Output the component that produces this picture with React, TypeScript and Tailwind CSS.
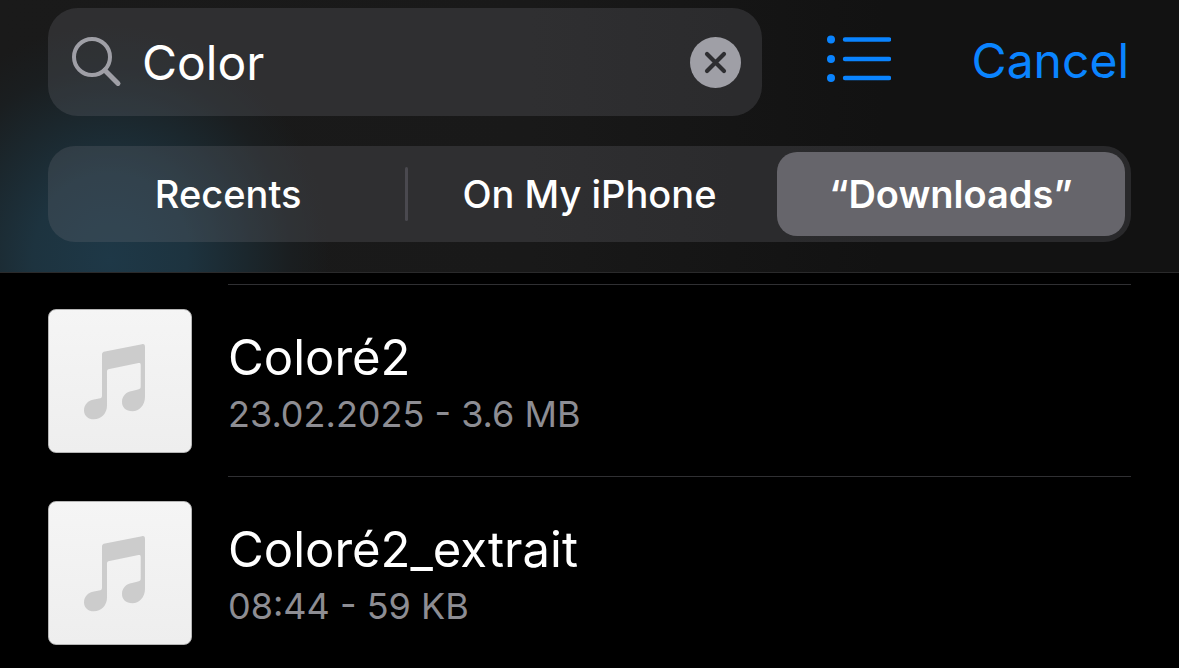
import { useState } from 'react'

const scopes = ['Recents', 'On My iPhone', '“Downloads”']

const files = [
  { name: 'Coloré2', details: '23.02.2025 - 3.6 MB' },
  { name: 'Coloré2_extrait', details: '08:44 - 59 KB' },
]

function SearchIcon() {
  return (
    <svg viewBox="0 0 50 50" fill="none" stroke="#9f9fa6" className="size-[50px] shrink-0" aria-hidden="true">
      <circle cx="20" cy="20" r="18" strokeWidth="4" />
      <path d="M32.8 33.2 46 46.4" strokeWidth="5" strokeLinecap="round" />
    </svg>
  )
}

function ClearIcon() {
  return (
    <svg viewBox="0 0 51 51" className="size-[51px]" aria-hidden="true">
      <circle cx="25.5" cy="25.5" r="25.5" fill="#9f9fa6" />
      <path d="M17 17 34 34M34 17 17 34" stroke="#2e2e31" strokeWidth="4.2" strokeLinecap="round" />
    </svg>
  )
}

function ListIcon() {
  return (
    <svg viewBox="0 0 64 48" className="h-12 w-16" aria-hidden="true">
      <g fill="#0a84ff">
        <circle cx="4" cy="4.5" r="4" />
        <circle cx="4" cy="24" r="4" />
        <circle cx="4" cy="43" r="4" />
      </g>
      <path d="M18 4.5H62M18 24H62M18 43H62" stroke="#0a84ff" strokeWidth="4.4" strokeLinecap="round" />
    </svg>
  )
}

function MusicThumbnail() {
  return (
    <div className="size-36 shrink-0 rounded-lg border border-[#b5b5b5] bg-linear-to-b from-[#f5f5f5] to-[#eeeeee]">
      <svg viewBox="0 0 142 142" fill="#cccccc" className="size-full" aria-hidden="true">
        <path d="M93 34.2C95.300 33.800 96 35 96 37V87C96 95.500 90 101.300 83.500 101.300C77 101.300 73 97.500 73 92C73 86 77 82 83 81L89 79.500C91 79 91.700 78.500 91.700 76.500V55C91.700 53.300 91 52.800 89.500 53.100L60.500 59C58.700 59.400 58 60 58 61.700V95.500C58 103.500 52 109.300 45 109.300C39 109.300 35 105.700 35 100.500C35 94.500 39 90.500 45 89.500L50 88.600C52.300 88.200 53 87.500 53 85.500V44.500C53 42.500 54 41.800 56 41.400Z" />
      </svg>
    </div>
  )
}

export default function App() {
  const [query, setQuery] = useState('Color')
  const [scope, setScope] = useState(2)

  return (
    <main className="min-h-screen bg-black font-['Inter',sans-serif] text-white">
      <header className="flex flex-col gap-[30px] border-b border-[#2a2a2b] bg-[radial-gradient(ellipse_220px_235px_at_110px_260px,#1e3847_0%,#1d333f_35%,#1b272d_62%,#1a1e20_82%,#1a1a1a00_100%),linear-gradient(to_right,#1a1a1a,#191919_45%,#121212_75%)] px-12 pt-2 pb-[30px]">
        <div className="flex items-center">
          <div className="flex h-[108px] min-w-0 flex-1 items-center rounded-[30px] bg-[#76767f]/24 pr-[21px] pl-6">
            <SearchIcon />
            <input
              type="text"
              aria-label="Search"
              value={query}
              onChange={(e) => setQuery(e.target.value)}
              className="mt-0.5 ml-5 h-16 min-w-0 flex-1 bg-transparent text-[48px] outline-none"
            />
            <button type="button" aria-label="Clear text" onClick={() => setQuery('')}>
              <ClearIcon />
            </button>
          </div>
          <button type="button" aria-label="List view" className="mb-1.5 ml-[65px]">
            <ListIcon />
          </button>
          <button type="button" className="mr-0.5 mb-0.5 ml-[81px] text-[48px] leading-[60px] text-[#0a84ff]">
            Cancel
          </button>
        </div>

        <div role="tablist" className="flex h-24 items-center rounded-[27px] bg-[#76767f]/24 p-1.5">
          {scopes.map((label, i) => (
            <div key={label} className="contents">
              {i > 0 && (
                <span
                  className={`mr-[7px] ml-[3px] h-[54px] w-[3px] rounded-full ${
                    scope === i || scope === i - 1 ? 'bg-transparent' : 'bg-[#4a494f]'
                  }`}
                />
              )}
              <button
                type="button"
                role="tab"
                aria-selected={scope === i}
                onClick={() => setScope(i)}
                className={`h-full flex-1 basis-0 rounded-[20px] text-[38px] ${
                  scope === i ? 'bg-[#66656b] font-semibold' : 'font-medium'
                }`}
              >
                {label}
              </button>
            </div>
          ))}
        </div>
      </header>

      <ul className="pt-[11px]">
        {files.map((file) => (
          <li key={file.name} className="flex h-48 px-12">
            <div className="pt-[25px]">
              <MusicThumbnail />
            </div>
            <div className="ml-9 min-w-0 flex-1 border-t border-[#303033] pt-[42px]">
              <p className="truncate text-[49px] leading-[62px]">{file.name}</p>
              <p className="truncate text-[36px] leading-[50px] text-[#8d8d93]">{file.details}</p>
            </div>
          </li>
        ))}
      </ul>
    </main>
  )
}
